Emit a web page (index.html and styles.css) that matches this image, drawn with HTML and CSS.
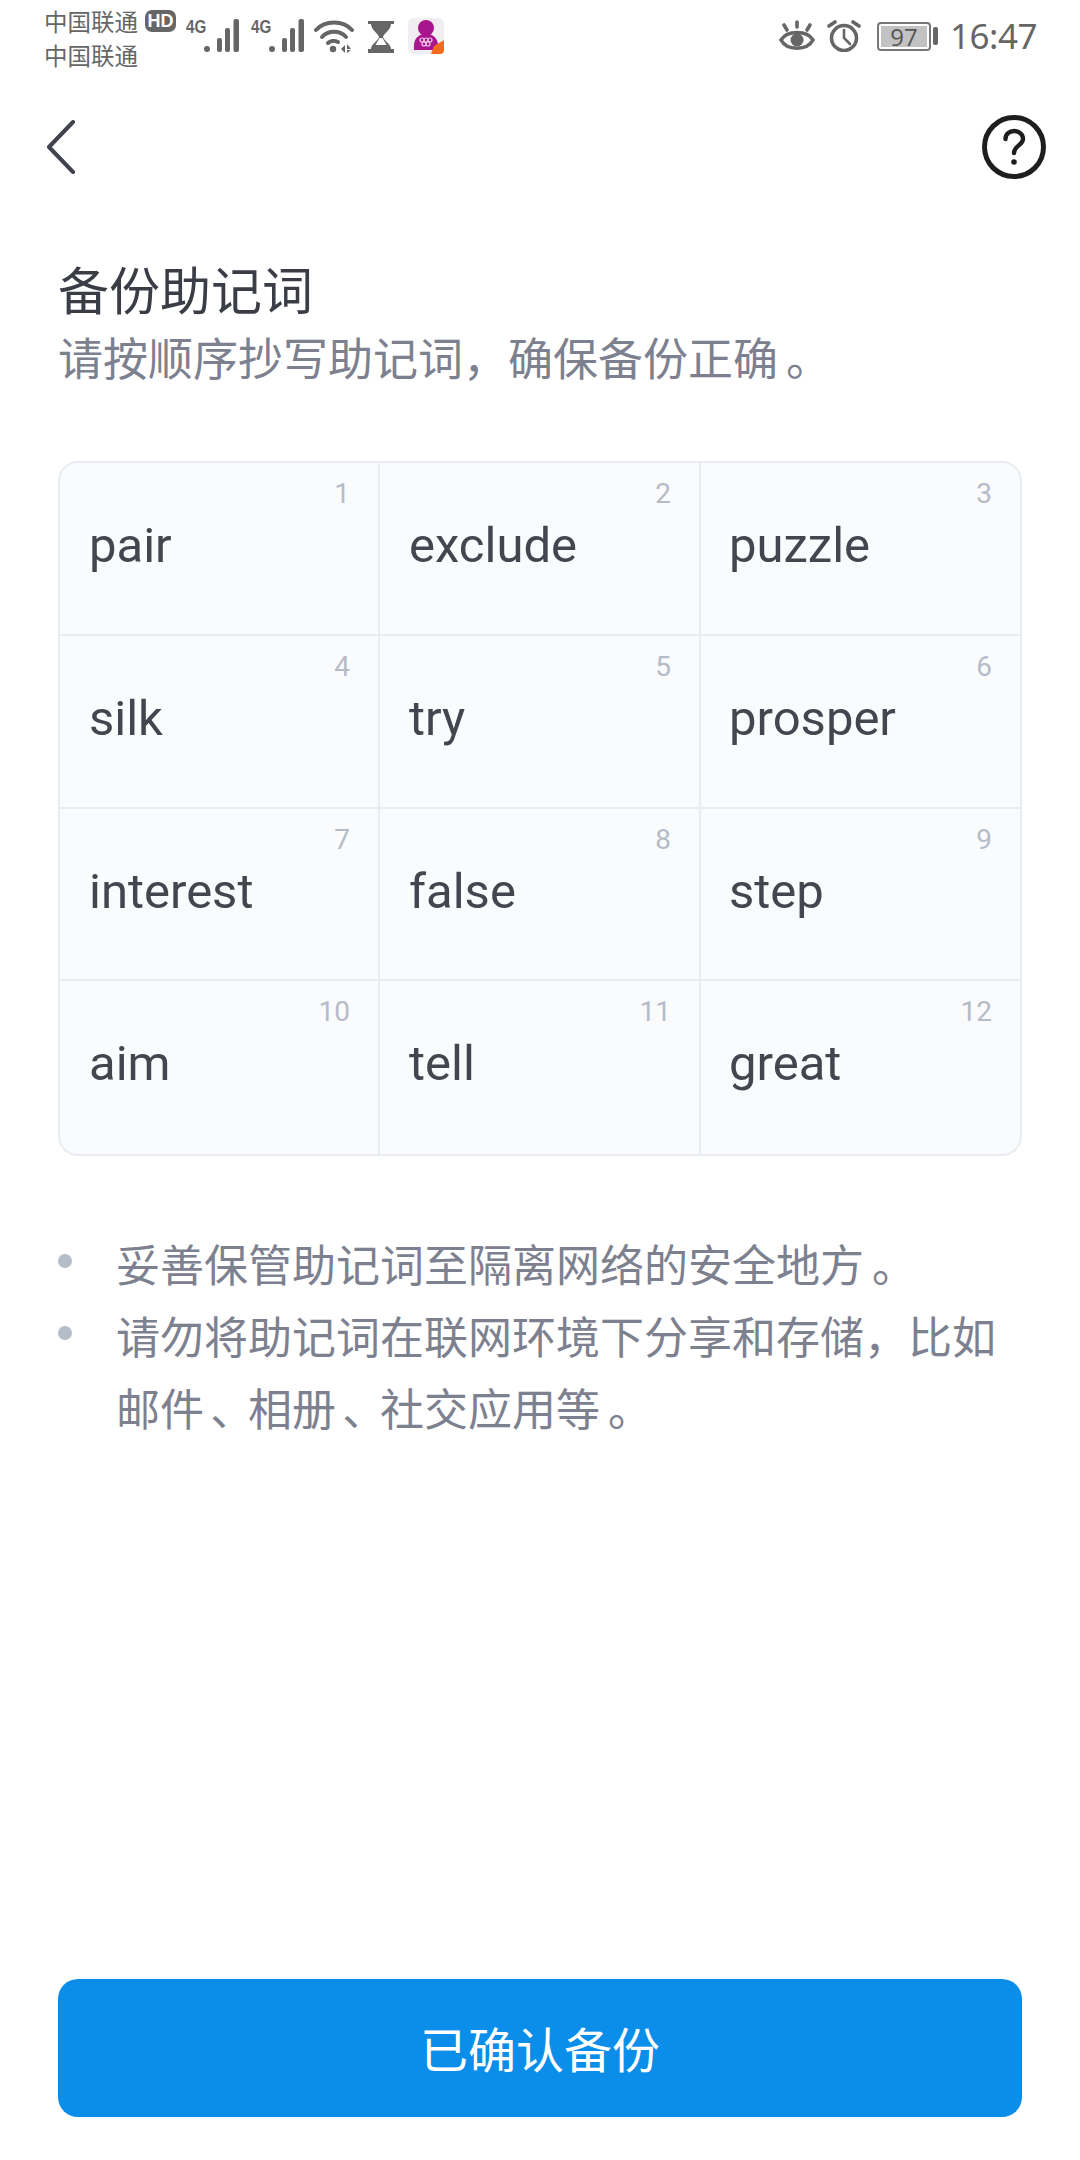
FILE: index.html
```html
<!DOCTYPE html>
<html lang="zh-CN">
<head>
<meta charset="utf-8">
<title>备份助记词</title>
<link rel="stylesheet" href="styles.css">
</head>
<body>
<div class="page">
  <div class="statusbar">
    <div class="status-left">
      <div class="carriers">
        <div class="carrier-line"><span>中国联通</span><span class="hd">HD</span></div>
        <div class="carrier-line"><span>中国联通</span></div>
      </div>
      <div class="signal">
        <span class="net">4G</span>
        <svg width="36" height="34" viewBox="0 0 36 34"><g fill="#666"><circle cx="3" cy="30" r="3"/><rect x="13" y="19" width="5" height="14" rx="2"/><rect x="21" y="9" width="5" height="24" rx="2"/><rect x="29.500" y="0" width="5.500" height="33" rx="2"/></g></svg>
      </div>
      <div class="signal">
        <span class="net">4G</span>
        <svg width="36" height="34" viewBox="0 0 36 34"><g fill="#666"><circle cx="3" cy="30" r="3"/><rect x="13" y="19" width="5" height="14" rx="2"/><rect x="21" y="9" width="5" height="24" rx="2"/><rect x="29.500" y="0" width="5.500" height="33" rx="2"/></g></svg>
      </div>
      <svg class="wifi" width="40" height="34" viewBox="0 0 40 34"><g fill="none" stroke="#666" stroke-width="4" stroke-linecap="round"><path d="M2 11C11 1 29 1 38 11"/><path d="M8 18C14 11 26 11 32 18"/><path d="M14 24C16 22 20 21 24 23"/></g><circle cx="19" cy="30" r="3.200" fill="#666"/><path d="M27 30l4-4v8zM33 25l4 5h-4zM33 31h4l-4 3z" fill="#666"/></svg>
      <svg class="hourglass" width="26" height="32" viewBox="0 0 26 32"><path d="M0 0h26v3h-3c0 6-7 9-8 13 1 4 8 7 8 12h3v4H0v-4h3c0-5 7-8 8-12-1-4-8-7-8-13H0z" fill="#666"/><path d="M6 3h14c0 3-3 5-7 6-4-1-7-3-7-6z" fill="#666"/><path d="M6 28c1-3 5-5 7-8 2 3 6 5 7 8z" fill="#666"/><path d="M11.500 17h3l4 7H7.500z" fill="#fff"/></svg>
      <svg class="app" width="36" height="36" viewBox="0 0 36 36"><rect width="36" height="36" rx="6" fill="#f1eef1"/><circle cx="18" cy="10" r="8" fill="#a8158c"/><path d="M6 32c-1-10 3-16 12-16s13 6 12 16z" fill="#a8158c"/><g fill="none" stroke="#eec6e4" stroke-width="1.200"><circle cx="14" cy="22" r="2"/><circle cx="18" cy="22" r="2"/><circle cx="22" cy="22" r="2"/><circle cx="16" cy="26" r="2"/><circle cx="20" cy="26" r="2"/></g><path d="M23 36l3-8 10-6v10a4 4 0 0 1-4 4z" fill="#f26a1b"/></svg>
    </div>
    <div class="status-right">
      <svg class="eye" width="36" height="32" viewBox="0 0 36 32"><g fill="none" stroke="#666" stroke-width="3.600" stroke-linecap="round"><path d="M2 20C8 10 28 10 34 20C28 31 8 31 2 20z"/><path d="M18 2v5M5 5l3 5M31 5l-3 5"/></g><circle cx="18" cy="20" r="6.500" fill="#666"/></svg>
      <svg class="alarm" width="34" height="32" viewBox="0 0 34 32"><g fill="none" stroke="#666" stroke-linecap="round"><circle cx="17" cy="18" r="12.500" stroke-width="3.600"/><path d="M17 10v8l6 6" stroke-width="2.600"/><path d="M2 6l6-4M32 6l-6-4" stroke-width="3.600"/></g></svg>
      <div class="battery"><div class="battery-body"><span class="battery-level">97</span></div><span class="battery-cap"></span></div>
      <span class="clock">16:47</span>
    </div>
  </div>

  <header class="nav">
    <svg class="back" width="30" height="54" viewBox="0 0 30 54"><path d="M27 2L3 27l24 25" fill="none" stroke="#41434d" stroke-width="4" stroke-linecap="round" stroke-linejoin="round"/></svg>
    <svg class="help" width="64" height="64" viewBox="0 0 64 64"><circle cx="32" cy="32" r="29.500" fill="none" stroke="#1c1e20" stroke-width="5"/><path d="M23.500 24c0-5 4-8 8.500-8s9 3 9 8c0 6-9 7-9 14" fill="none" stroke="#1c1e20" stroke-width="4.400" stroke-linecap="round"/><circle cx="32" cy="47" r="2.800" fill="#1c1e20"/></svg>
  </header>

  <section class="intro">
    <h1 class="title">备份助记词</h1>
    <p class="subtitle">请按顺序抄写助记词，确保备份正确<span class="stop">。</span></p>
  </section>

  <div class="words">
    <div class="cell"><span class="num">1</span><span class="word">pair</span></div>
    <div class="cell"><span class="num">2</span><span class="word">exclude</span></div>
    <div class="cell"><span class="num">3</span><span class="word">puzzle</span></div>
    <div class="cell"><span class="num">4</span><span class="word">silk</span></div>
    <div class="cell"><span class="num">5</span><span class="word">try</span></div>
    <div class="cell"><span class="num">6</span><span class="word">prosper</span></div>
    <div class="cell"><span class="num">7</span><span class="word">interest</span></div>
    <div class="cell"><span class="num">8</span><span class="word">false</span></div>
    <div class="cell"><span class="num">9</span><span class="word">step</span></div>
    <div class="cell"><span class="num">10</span><span class="word">aim</span></div>
    <div class="cell"><span class="num">11</span><span class="word">tell</span></div>
    <div class="cell"><span class="num">12</span><span class="word">great</span></div>
  </div>

  <ul class="notes">
    <li class="note">妥善保管助记词至隔离网络的安全地方<span class="stop">。</span></li>
    <li class="note"><span class="note-line">请勿将助记词在联网环境下分享和存储，比如</span><span class="note-line">邮件<span class="pause">、</span>相册<span class="pause">、</span>社交应用等<span class="stop">。</span></span></li>
  </ul>

  <button class="confirm" type="button">已确认备份</button>
</div>
</body>
</html>
```
FILE: styles.css
```css
* { box-sizing: border-box; }
html, body { margin: 0; padding: 0; background: #fff; }
body { font-family: "Noto Sans CJK SC", "Noto Sans", sans-serif; }
.page { width: 1080px; height: 2160px; display: flex; flex-direction: column; padding-bottom: 43px; }

.statusbar { height: 76px; padding: 4px 43px 0 44px; display: flex; justify-content: space-between; align-items: flex-start; color: #666; }
.status-left { display: flex; align-items: flex-start; }
.carriers { width: 142px; font-size: 23.500px; line-height: 34px; }
.carrier-line { display: flex; align-items: center; gap: 7px; height: 34px; }
.hd { background: #666; color: #fff; font: 700 18px/22px "Liberation Sans", sans-serif; height: 22px; width: 31px; text-align: center; border-radius: 7px; }
.signal { position: relative; width: 65px; height: 48px; padding: 15px 0 0 18px; }
.signal .net { position: absolute; left: 0; top: 12px; font: 700 19px/22px "Liberation Sans", sans-serif; transform: scaleX(.8); transform-origin: left; color: #666; }
.wifi { margin: 15px 0 0 -2px; }
.hourglass { margin: 17px 0 0 14px; }
.app { margin: 14px 0 0 14px; }

.status-right { display: flex; align-items: center; height: 64px; }
.alarm { margin-left: 12px; }
.battery { display: flex; align-items: center; margin-left: 16px; }
.battery-body { width: 54px; height: 29px; border: 2px solid #777; border-radius: 4px; padding: 2px; display: flex; }
.battery-level { flex: 1; background: #c2c2c2; color: #555; font: 24px/21px "Open Sans", sans-serif; text-align: center; }
.battery-cap { width: 5px; height: 18px; background: #666; border-radius: 2px; margin-left: 2px; }
.clock { font: 35px/40px "Noto Sans", sans-serif; letter-spacing: -.5px; margin-left: 12px; color: #666; }

.nav { height: 72px; margin-top: 35px; padding: 0 34px 0 46px; display: flex; justify-content: space-between; align-items: center; }

.intro { margin-top: 69px; padding: 0 58px; }
.title { margin: 0; font-size: 51px; font-weight: 400; line-height: 72px; color: #3b3d46; }
.subtitle { margin: 1px 0 0; font-size: 45px; line-height: 64px; color: #7d818f; }
.stop { font-feature-settings: "halt"; padding: 0 .32em 0 .18em; }
.pause { font-feature-settings: "halt"; padding: 0 .36em 0 .14em; }

.words { margin: 72px 58px 0; display: grid; grid-template-columns: 320px 321px 1fr; border: 2px solid #e9ecf2; border-radius: 20px; background: #fafbfd; overflow: hidden; }
.cell { height: 172.750px; padding: 17px 28px 0 29px; border-right: 2px solid #e9ecf2; border-bottom: 2px solid #e9ecf2; display: flex; flex-direction: column; }
.cell:nth-child(3n) { border-right: 0; padding-left: 28px; }
.cell:nth-last-child(-n+3) { border-bottom: 0; }
.num { align-self: flex-end; font: 28px/28px Roboto, sans-serif; color: #b5bcc8; }
.word { font: 49px/64px Roboto, sans-serif; color: #44464f; margin-top: 6px; }

.notes { list-style: none; margin: 71px 58px 0; padding: 0; flex: 1; }
.note { position: relative; padding-left: 58px; font-size: 44px; line-height: 72px; color: #7d818f; }
.note::before { content: ""; position: absolute; left: 0; top: 27px; width: 14px; height: 14px; border-radius: 50%; background: #b3bdc8; }
.note-line { display: block; }

.confirm { margin: 0 58px; height: 138px; padding: 0 0 3px; border: 0; border-radius: 20px; background: #0a8ee9; color: #fff; font: 48px/60px "Noto Sans CJK SC", sans-serif; }
```
